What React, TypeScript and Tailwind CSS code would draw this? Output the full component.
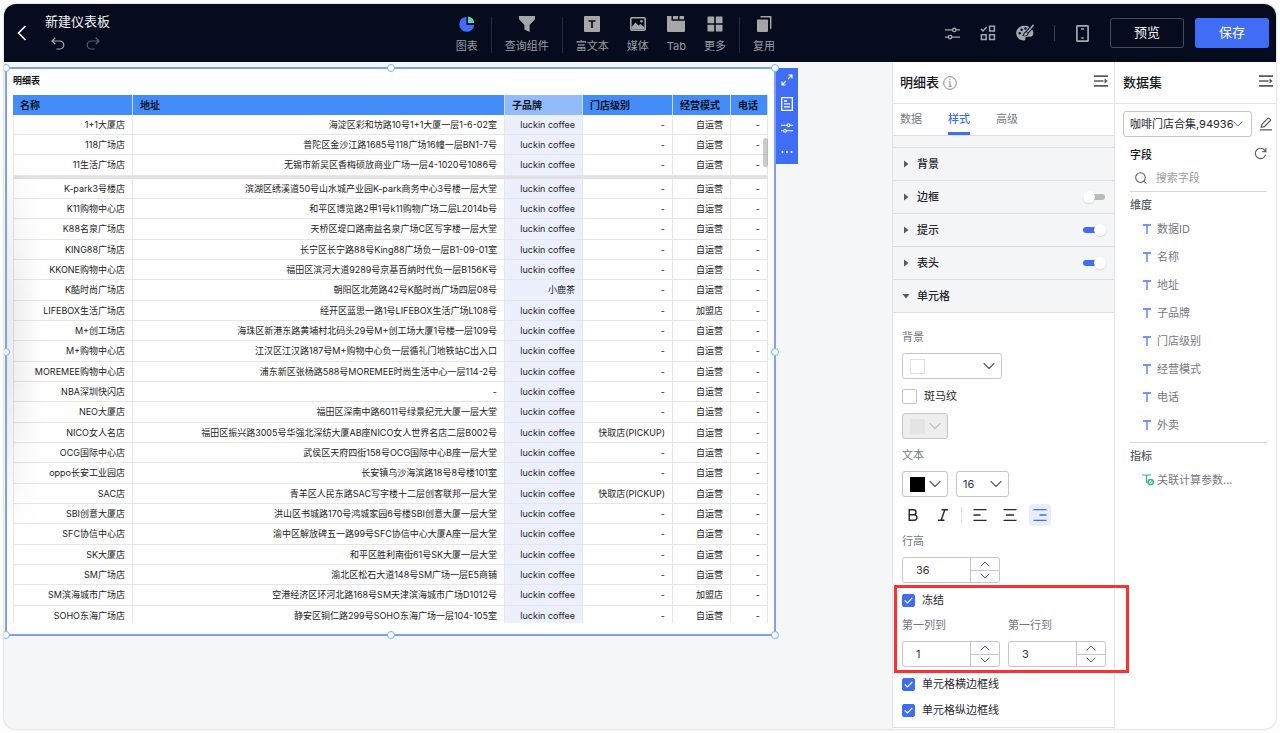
import React, { useState } from 'react';
import type { ReactNode } from 'react';
import { ChevronDown, ChevronUp } from 'lucide-react';

type Row = [string, string, string, string, string];

const LK = 'luckin coffee';
const ZY = '自运营';

const frozenRows: Row[] = [
  ['1+1大厦店', '海淀区彩和坊路10号1+1大厦一层1-6-02室', LK, '-', ZY],
  ['118广场店', '普陀区金沙江路1685号118广场16幢一层BN1-7号', LK, '-', ZY],
  ['11生活广场店', '无锡市新吴区香梅硕放商业广场一层4-1020号1086号', LK, '-', ZY],
];

const bodyRows: Row[] = [
  ['K-park3号楼店', '滨湖区绣溪道50号山水城产业园K-park商务中心3号楼一层大堂', LK, '-', ZY],
  ['K11购物中心店', '和平区博览路2甲1号k11购物广场二层L2014b号', LK, '-', ZY],
  ['K88名泉广场店', '天桥区堤口路南益名泉广场C区写字楼一层大堂', LK, '-', ZY],
  ['KING88广场店', '长宁区长宁路88号King88广场负一层B1-09-01室', LK, '-', ZY],
  ['KKONE购物中心店', '福田区滨河大道9289号京基百纳时代负一层B156K号', LK, '-', ZY],
  ['K酷时尚广场店', '朝阳区北苑路42号K酷时尚广场四层08号', '小鹿茶', '-', ZY],
  ['LIFEBOX生活广场店', '经开区蓝思一路1号LIFEBOX生活广场L108号', LK, '-', '加盟店'],
  ['M+创工场店', '海珠区新港东路黄埔村北码头29号M+创工场大厦1号楼一层109号', LK, '-', ZY],
  ['M+购物中心店', '江汉区江汉路187号M+购物中心负一层循礼门地铁站C出入口', LK, '-', ZY],
  ['MOREMEE购物中心店', '浦东新区张杨路588号MOREMEE时尚生活中心一层114-2号', LK, '-', ZY],
  ['NBA深圳快闪店', '-', LK, '-', ZY],
  ['NEO大厦店', '福田区深南中路6011号绿景纪元大厦一层大堂', LK, '-', ZY],
  ['NICO女人名店', '福田区振兴路3005号华强北深纺大厦AB座NICO女人世界名店二层B002号', LK, '快取店(PICKUP)', ZY],
  ['OCG国际中心店', '武侯区天府四街158号OCG国际中心B座一层大堂', LK, '-', ZY],
  ['oppo长安工业园店', '长安镇乌沙海滨路18号8号楼101室', LK, '-', ZY],
  ['SAC店', '青羊区人民东路SAC写字楼十二层创客联邦一层大堂', LK, '快取店(PICKUP)', ZY],
  ['SBI创意大厦店', '洪山区书城路170号鸿城家园6号楼SBI创意大厦一层大堂', LK, '-', ZY],
  ['SFC协信中心店', '渝中区解放碑五一路99号SFC协信中心大厦A座一层大堂', LK, '-', ZY],
  ['SK大厦店', '和平区胜利南街61号SK大厦一层大堂', LK, '-', ZY],
  ['SM广场店', '渝北区松石大道148号SM广场一层E5商铺', LK, '-', ZY],
  ['SM滨海城市广场店', '空港经济区环河北路168号SM天津滨海城市广场D1012号', LK, '-', '加盟店'],
  ['SOHO东海广场店', '静安区铜仁路299号SOHO东海广场一层104-105室', LK, '-', ZY],
];

const dimensions = ['数据ID', '名称', '地址', '子品牌', '门店级别', '经营模式', '电话', '外卖'];

/* ---------- icons ---------- */

const UndoIcon = () => (
  <svg viewBox="0 0 14 13" className="h-[13px] w-[14px]" fill="none" stroke="currentColor" strokeWidth="1.200" aria-hidden="true">
    <path d="M4.300.800 1 4l3.300 3.200M1 4h7.800a4 4 0 0 1 0 8H5.500" />
  </svg>
);
const RedoIcon = () => (
  <svg viewBox="0 0 14 13" className="h-[13px] w-[14px]" fill="none" stroke="currentColor" strokeWidth="1.200" aria-hidden="true">
    <path d="M9.700.800 13 4 9.700 7.200M13 4H5.200a4 4 0 0 0 0 8h3.300" />
  </svg>
);
const PieIcon = () => (
  <svg viewBox="0 0 16 16" className="h-4 w-4" aria-hidden="true">
    <path d="M7.4.8A7.5 7.5 0 1 0 15.2 9H7.4z" fill="#3f6df6" />
    <path d="M9 .6A7 7 0 0 1 15.2 7H9z" fill="#58d3ad" />
  </svg>
);
const FunnelIcon = () => (
  <svg viewBox="0 0 16 16" className="h-4 w-4" fill="#a6a6a6" aria-hidden="true">
    <path d="M0 0h16v3.2L10.6 9v7L5.4 13.4V9L0 3.2z" />
  </svg>
);
const RichTextIcon = () => (
  <svg viewBox="0 0 16 16" className="h-4 w-4" aria-hidden="true">
    <rect width="16" height="16" rx="1" fill="#a6a6a6" />
    <path d="M4.5 5h7M8 5v7" stroke="#060c1d" strokeWidth="1.7" fill="none" />
  </svg>
);
const MediaIcon = () => (
  <svg viewBox="0 0 16 16" className="h-4 w-4" aria-hidden="true">
    <rect x="0.8" y="1.8" width="14.4" height="12.4" rx="1" fill="none" stroke="#a6a6a6" strokeWidth="1.6" />
    <path d="M1.5 13.5V11L5.5 6.5l3 3L10.500 8l4 3.500v2z" fill="#a6a6a6" />
    <circle cx="11.500" cy="5.300" r="1.300" fill="#a6a6a6" />
  </svg>
);
const TabIcon = () => (
  <svg viewBox="0 0 18 16" className="h-4 w-[18px]" fill="#a6a6a6" aria-hidden="true">
    <path d="M0 0h4.500v4.800H18V15a1 1 0 0 1-1 1H1a1 1 0 0 1-1-1z" />
    <path d="M6 0h5v3.300H6zM12.500 0H17v3.300h-4.500z" />
  </svg>
);
const MoreIcon = () => (
  <svg viewBox="0 0 16 16" className="h-4 w-4" fill="#a6a6a6" aria-hidden="true">
    <rect x="0.500" y="0.500" width="6.700" height="6.700" rx="0.500" />
    <rect x="8.800" y="0.500" width="6.700" height="6.700" rx="0.500" />
    <rect x="0.500" y="8.800" width="6.700" height="6.700" rx="0.500" />
    <rect x="8.800" y="8.800" width="6.700" height="6.700" rx="0.500" />
  </svg>
);
const ReuseIcon = () => (
  <svg viewBox="0 0 16 16" className="h-4 w-4" aria-hidden="true">
    <rect x="1" y="3.500" width="11" height="12.500" rx="0.800" fill="#a6a6a6" />
    <path d="M4.500.8h10.200v12" fill="none" stroke="#a6a6a6" strokeWidth="1.500" />
  </svg>
);
const SlidersIcon = ({ className }: { className: string }) => (
  <svg viewBox="0 0 14 14" className={className} fill="none" stroke="currentColor" strokeWidth="1.200" aria-hidden="true">
    <path d="M0 3.700h7M10.400 3.700H14M0 10.300h3M6.400 10.300H14" />
    <circle cx="8.700" cy="3.700" r="1.600" />
    <circle cx="4.700" cy="10.300" r="1.600" />
  </svg>
);
const ChecklistIcon = () => (
  <svg viewBox="0 0 16 16" className="h-4 w-4" fill="none" stroke="#a4a7ae" strokeWidth="1.500" aria-hidden="true">
    <path d="M1 4l2 2 3.700-4" />
    <rect x="9.600" y="1.200" width="4.800" height="4.800" />
    <rect x="1.400" y="9.700" width="4.800" height="4.800" />
    <rect x="9.600" y="9.700" width="4.800" height="4.800" />
  </svg>
);
const PaletteIcon = () => (
  <svg viewBox="0 0 18 18" className="h-[18px] w-[18px]" aria-hidden="true">
    <path
      d="M8.700 1.800C3.900 1.800.2 5 .2 9c0 4 3.300 7.500 7.600 7.500 1.400 0 1.700-.8 1.600-1.700-.1-1.200.3-2 1.600-2h3.200c2 0 3.300-1.400 3.200-3.700-.2-4.200-4-7.300-8.700-7.300z"
      fill="#a4a7ae"
    />
    <g fill="#060c1d">
      <circle cx="3.800" cy="9.200" r="1.200" />
      <circle cx="5.600" cy="5.700" r="1.200" />
      <circle cx="9.500" cy="4.500" r="1.200" />
    </g>
    <path d="M17.600.8 11 8.600" stroke="#060c1d" strokeWidth="3.600" />
    <path d="M11.600 7.500c-2-.6-3.900.6-4.200 2.600-.1.900-.8 1.300-1.500 1.500 2.400 1.400 6.200.9 6.700-2.400z" fill="#060c1d" />
    <path d="M17.600.8 11.400 8.200" stroke="#a4a7ae" strokeWidth="1.500" />
    <path d="M11 8.400c-1.300-.4-2.500.5-2.700 1.800-.1.700-.5 1-1 1.200 1.500.6 3.900.2 4.300-1.800z" fill="#a4a7ae" />
  </svg>
);
const PhoneIcon = () => (
  <svg viewBox="0 0 13 17" className="h-[17px] w-[13px]" fill="none" stroke="#a4a7ae" strokeWidth="1.700" aria-hidden="true">
    <rect x="0.900" y="0.900" width="11.200" height="15.200" rx="0.500" />
    <path d="M5 4h3M5.300 13h2.400" />
  </svg>
);
const CollapseIcon = () => (
  <svg viewBox="0 0 14 12" className="h-3 w-[14px]" aria-hidden="true">
    <path d="M0 1.200h14M0 6h9.500M0 10.800h14" stroke="#565b66" strokeWidth="1.700" />
    <path d="M10.500 3.600v4.800L13.800 6z" fill="#565b66" />
  </svg>
);
const InfoIcon = () => (
  <svg viewBox="0 0 14 14" className="h-[14px] w-[14px]" fill="none" stroke="#83868f" aria-hidden="true">
    <circle cx="7" cy="7" r="6.300" />
    <path d="M5.800 5.700H7.100v4.600M5.500 10.300h3.200M6.300 3.600h1.200" />
  </svg>
);
const PencilIcon = () => (
  <svg viewBox="0 0 12 14" className="h-[14px] w-3" fill="none" stroke="#565b66" strokeWidth="1.200" aria-hidden="true">
    <path d="M1.300 10.300l.6-3L7.800 1.400a1 1 0 0 1 1.500 0l.9.9a1 1 0 0 1 0 1.500L4.300 9.700zM0 12.800h12" />
  </svg>
);
const RefreshIcon = () => (
  <svg viewBox="0 0 13 13" className="h-[13px] w-[13px]" fill="none" stroke="#565b66" strokeWidth="1.100" aria-hidden="true">
    <path d="M11.500 7.800A5.200 5.200 0 1 1 10.600 3.200L11.800 4.500M11.900 1v3.600H8.300" />
  </svg>
);
const SearchIcon = () => (
  <svg viewBox="0 0 14 14" className="h-[14px] w-[14px]" fill="none" stroke="#565b66" strokeWidth="1.200" aria-hidden="true">
    <circle cx="6.500" cy="6.500" r="5.700" />
    <path d="M10.600 10.700l2.900 2.900" />
  </svg>
);
const FieldIcon = () => (
  <svg viewBox="0 0 8 10" className="h-[10px] w-2" fill="none" stroke="#4a76f5" strokeWidth="1.300" aria-hidden="true">
    <path d="M0 1h8M4 1v9" />
  </svg>
);
const MetricIcon = () => (
  <svg viewBox="0 0 12 12" className="h-3 w-3" fill="none" stroke="#35b38c" aria-hidden="true">
    <path d="M0 1h9M4.500 1v8" strokeWidth="1.200" />
    <circle cx="8.700" cy="8" r="2.600" strokeWidth="1.500" />
    <path d="M7.600 9l2.200-2" />
  </svg>
);
const ExpandIcon = () => (
  <svg viewBox="0 0 12 12" className="h-3 w-3" fill="none" stroke="white" strokeWidth="1.100" aria-hidden="true">
    <path d="M7 5l4-4M7.500 1H11v3.500M5 7l-4 4M1 7.500V11h3.500" />
  </svg>
);
const SheetIcon = () => (
  <svg viewBox="0 0 12 14" className="h-[14px] w-3" fill="none" stroke="white" strokeWidth="1.300" aria-hidden="true">
    <path d="M.7.7h10.600v12.600H.7zM3 4h3M3 6.800h6M3 9.800h6" />
  </svg>
);
const DotsIcon = () => (
  <svg viewBox="0 0 12 4" className="h-1 w-3" fill="white" aria-hidden="true">
    <circle cx="1.500" cy="2" r="1" />
    <circle cx="6" cy="2" r="1" />
    <circle cx="10.500" cy="2" r="1" />
  </svg>
);

/* ---------- controls ---------- */

function ToolItem({ label, children }: { label: string; children: ReactNode }) {
  return (
    <button type="button" className="flex flex-col items-center gap-[6px] px-[9px] text-[11px] leading-4 text-[#9b9da3]">
      {children}
      <span>{label}</span>
    </button>
  );
}

const ToolDivider = () => <span className="mx-1 h-9 w-px bg-[#262b3a]" />;

function Toggle({ label, initial }: { label: string; initial: boolean }) {
  return (
    <input
      type="checkbox"
      role="switch"
      aria-label={label}
      defaultChecked={initial}
      className="relative h-[6px] w-[22px] appearance-none rounded-full bg-[#b9bbbf] before:absolute before:-top-[3px] before:left-0 before:h-3 before:w-3 before:rounded-full before:bg-white before:shadow-[0_1px_2px_rgba(0,0,0,0.12)] checked:bg-[#3f6df6] checked:before:left-[11px]"
    />
  );
}

function CheckRow({ label, initial }: { label: string; initial: boolean }) {
  const [on, setOn] = useState(initial);
  return (
    <label className="flex h-[18px] items-center gap-[7px] text-[11px] text-[#26282d]">
      <span className={on ? 'grid h-[13px] w-[13px] place-items-center' : 'grid h-[15px] w-[15px] place-items-center'}>
        <input
          type="checkbox"
          checked={on}
          onChange={(e) => setOn(e.target.checked)}
          className="col-start-1 row-start-1 h-[15px] w-[15px] appearance-none rounded-[2px] border border-[#c4c6cb] bg-white checked:h-[13px] checked:w-[13px] checked:border-[#3f6df6] checked:bg-[#3f6df6]"
        />
        {on && (
          <svg viewBox="0 0 9 7" className="pointer-events-none col-start-1 row-start-1 h-[7px] w-[9px]" fill="none" stroke="white" strokeWidth="1.200" aria-hidden="true">
            <path d="M.7 3.300 3.400 6 8.300.8" />
          </svg>
        )}
      </span>
      {label}
    </label>
  );
}

function Stepper({ id, value }: { id: string; value: number }) {
  const [n, setN] = useState(value);
  return (
    <div className="flex h-[26px] w-[98px] overflow-hidden rounded-[3px] border border-[#c4c6cb]">
      <input
        id={id}
        value={n}
        onChange={(e) => setN(Number(e.target.value) || 0)}
        className="w-[67px] pl-[13px] text-[11px] text-[#33363d] outline-none"
      />
      <div className="flex flex-1 flex-col divide-y divide-[#c4c6cb] border-l border-[#c4c6cb] text-[#565b66]">
        <button type="button" aria-label="增加" onClick={() => setN(n + 1)} className="flex flex-1 items-center justify-center overflow-hidden">
          <ChevronUp size={16} strokeWidth={1.500} className="shrink-0" />
        </button>
        <button type="button" aria-label="减少" onClick={() => setN(n - 1)} className="flex flex-1 items-center justify-center overflow-hidden">
          <ChevronDown size={16} strokeWidth={1.500} className="shrink-0" />
        </button>
      </div>
    </div>
  );
}

function Section({ title, open = false, toggle }: { title: string; open?: boolean; toggle?: boolean }) {
  return (
    <div className="flex h-[33px] items-center border-b border-[#dcdee2] bg-[#f4f5f7] pr-[9px] pl-[10px]">
      <button type="button" aria-expanded={open} className="flex flex-1 items-center gap-2 text-left text-[11px] font-medium text-[#26282d]">
        <svg viewBox="0 0 6 8" className={open ? 'h-2 w-[6px] rotate-90' : 'h-2 w-[6px]'} fill="#565b66" aria-hidden="true">
          <path d="M1 .5v7L5.500 4z" />
        </svg>
        {title}
      </button>
      {toggle !== undefined && <Toggle label={title} initial={toggle} />}
    </div>
  );
}

const labelStyle = 'block h-4 text-[11px] leading-4 text-[#747883]';

function AlignIcon({ mid }: { mid: string }) {
  return (
    <svg viewBox="0 0 14 12" className="h-3 w-[14px]" fill="none" stroke="currentColor" strokeWidth="1.300" aria-hidden="true">
      <path d={`M.5.700h13M${mid}M.5 11.300h13`} />
    </svg>
  );
}

/* ---------- detail table ---------- */

function DataRow({ row }: { row: Row }) {
  const cell = 'border-r border-b border-[#e6e6e6] pr-[7px] text-right whitespace-nowrap';
  return (
    <tr className="h-5 nth-[3n]:h-[21px]">
      <td className={`${cell} border-l`}>{row[0]}</td>
      <td className={cell}>{row[1]}</td>
      <td className={`${cell} bg-[#ecf0fd]`}>{row[2]}</td>
      <td className={cell}>{row[3]}</td>
      <td className={cell}>{row[4]}</td>
      <td className={cell}>-</td>
    </tr>
  );
}

function DetailTable() {
  const head = 'border-r border-[#c9dcfa] pl-[7px] text-left font-bold';
  return (
    <table className="w-full table-fixed border-separate border-spacing-0 text-[9px] leading-4 text-[#222]">
      <colgroup>
        <col className="w-[120px]" />
        <col />
        <col className="w-[78px]" />
        <col className="w-[90px]" />
        <col className="w-[58px]" />
        <col className="w-[37px]" />
      </colgroup>
      <thead>
        <tr className="h-5 bg-[#448cf8] text-[10px] text-[#0c1526]">
          <th className={head}>名称</th>
          <th className={head}>地址</th>
          <th className={`${head} bg-[#92bbfa]`}>子品牌</th>
          <th className={head}>门店级别</th>
          <th className={head}>经营模式</th>
          <th className={head}>电话</th>
        </tr>
      </thead>
      <tbody>
        {frozenRows.map((r) => (
          <DataRow key={r[0]} row={r} />
        ))}
      </tbody>
      <tbody aria-hidden="true">
        <tr className="h-[3px] leading-none">
          <td colSpan={6} className="bg-[#e2e2e2] p-0" />
        </tr>
      </tbody>
      <tbody>
        {bodyRows.map((r) => (
          <DataRow key={r[0]} row={r} />
        ))}
      </tbody>
    </table>
  );
}

const handles = [
  '-top-[5px] -left-[5px]',
  '-top-[5px] left-1/2 -ml-1',
  '-top-[5px] -right-[5px]',
  'top-1/2 -mt-1 -left-[5px]',
  'top-1/2 -mt-1 -right-[5px]',
  '-bottom-[5px] -left-[5px]',
  '-bottom-[5px] left-1/2 -ml-1',
  '-bottom-[5px] -right-[5px]',
];

function Header() {
  return (
    <header className="flex h-[58px] shrink-0 items-center bg-[#060c1d] pr-[7px]">
      <div className="flex w-[35%] items-center gap-[17px] pl-3">
        <button type="button" aria-label="返回">
          <svg viewBox="0 0 12 16" className="h-4 w-3" fill="none" stroke="white" strokeWidth="1.600" aria-hidden="true">
            <path d="M9.500 1 2.500 8l7 7" />
          </svg>
        </button>
        <div className="flex flex-col gap-2 pb-1">
          <h1 className="text-[13px] leading-4 text-[#f2f3f5]">新建仪表板</h1>
          <div className="flex gap-[21px] px-[6px]">
            <button type="button" aria-label="撤销" className="text-[#a4a7ae]">
              <UndoIcon />
            </button>
            <button type="button" aria-label="重做" className="text-[#565b66]">
              <RedoIcon />
            </button>
          </div>
        </div>
      </div>
      <nav className="flex items-center pt-[3px]">
        <ToolItem label="图表"><PieIcon /></ToolItem>
        <ToolDivider />
        <ToolItem label="查询组件"><FunnelIcon /></ToolItem>
        <ToolDivider />
        <ToolItem label="富文本"><RichTextIcon /></ToolItem>
        <ToolItem label="媒体"><MediaIcon /></ToolItem>
        <ToolItem label="Tab"><TabIcon /></ToolItem>
        <ToolItem label="更多"><MoreIcon /></ToolItem>
        <ToolDivider />
        <ToolItem label="复用"><ReuseIcon /></ToolItem>
      </nav>
      <div className="ml-auto flex items-center gap-[21px]">
        <div className="flex items-center gap-5">
          <button type="button" aria-label="筛选设置" className="text-[#a4a7ae]"><SlidersIcon className="h-[15px] w-[15px]" /></button>
          <button type="button" aria-label="组件管理"><ChecklistIcon /></button>
          <button type="button" aria-label="主题"><PaletteIcon /></button>
          <span className="h-4 w-px bg-[#3a3f4d]" />
        </div>
        <button type="button" aria-label="移动端"><PhoneIcon /></button>
        <div className="flex gap-[11px] text-[13px]">
          <button type="button" className="h-[30px] w-[74px] rounded-[3px] border border-[#464b59] text-[#f2f3f5]">预览</button>
          <button type="button" className="h-[30px] w-[74px] rounded-[3px] bg-[#3f6df6] text-white">保存</button>
        </div>
      </div>
    </header>
  );
}

function Canvas() {
  const action = 'flex h-6 w-full items-center justify-center text-white';
  return (
    <main className="flex min-w-0 flex-1 items-start bg-[#f5f6f8] pt-[5px] pl-px">
      <section className="relative flex h-[569px] w-[771px] shrink-0 flex-col border-2 border-[#7f9ff5] bg-white pt-1 pr-[6px] pb-[11px] pl-[6px]">
        <h2 className="mb-[6px] text-[9px] leading-4 font-bold text-[#111]">明细表</h2>
        <div className="relative min-h-0 flex-1 overflow-hidden">
          <DetailTable />
          <span className="absolute top-[43px] right-0 h-[29px] w-[5px] rounded-full bg-black/20" />
        </div>
        <span className="pointer-events-none absolute top-[72px] left-0 h-[400px] w-9 bg-linear-to-r from-black/8 to-transparent mask-y-from-60% mask-y-to-100%" />
        {handles.map((h) => (
          <span key={h} className={`absolute h-2 w-2 rounded-full border border-[#6cb6f5] bg-white ${h}`} />
        ))}
      </section>
      <div className="mt-px flex w-[22px] flex-col bg-[#3f6df6]">
        <button type="button" aria-label="全屏" className={action}><ExpandIcon /></button>
        <button type="button" aria-label="查看数据" className={action}><SheetIcon /></button>
        <button type="button" aria-label="设置" className={action}><SlidersIcon className="h-3 w-3" /></button>
        <button type="button" aria-label="更多操作" className={action}><DotsIcon /></button>
      </div>
    </main>
  );
}

function StylePanel() {
  const box = 'flex h-[26px] items-center rounded-[3px] border border-[#c4c6cb]';
  const tool = 'flex h-[22px] w-[22px] items-center justify-center';
  return (
    <aside className="flex w-[223px] shrink-0 flex-col border-x border-[#e1e3e6] bg-white">
      <div className="flex h-[42px] shrink-0 items-center gap-1 border-b border-[#e4e5e8] pr-[6px] pl-[7px]">
        <h2 className="text-[13px] font-medium text-[#16181d]">明细表</h2>
        <InfoIcon />
        <button type="button" aria-label="收起样式面板" className="mb-1 ml-auto"><CollapseIcon /></button>
      </div>
      <div role="tablist" className="flex h-8 shrink-0 gap-[26px] border-b border-[#dcdee2] pl-[7px] text-[11px] text-[#747883]">
        <button type="button" role="tab" aria-selected="false" className="border-y-3 border-transparent">数据</button>
        <button type="button" role="tab" aria-selected="true" className="border-y-3 border-t-transparent border-b-[#3f6df6] font-medium text-[#3f6df6]">样式</button>
        <button type="button" role="tab" aria-selected="false" className="border-y-3 border-transparent">高级</button>
      </div>
      <div className="h-3 shrink-0 border-b border-[#dcdee2] bg-[#f4f5f7]" />
      <Section title="背景" />
      <Section title="边框" toggle={false} />
      <Section title="提示" toggle={true} />
      <Section title="表头" toggle={true} />
      <Section title="单元格" open />
      <div className="flex flex-col gap-2 border-b border-[#dcdee2] px-[9px] pt-4 pb-2">
        <span className={labelStyle}>背景</span>
        <button type="button" aria-label="背景颜色" className={`${box} w-[100px] justify-between pr-[2px] pl-[7px] text-[#565b66]`}>
          <span className="h-[15px] w-[15px] border border-[#dcdee2] bg-white" />
          <ChevronDown size={20} strokeWidth={1.300} />
        </button>
        <CheckRow label="斑马纹" initial={false} />
        <button type="button" disabled aria-label="斑马纹颜色" className={`${box} w-[46px] justify-between bg-[#eeeeee] pr-[2px] pl-[7px] text-[#bfc1c5]`}>
          <span className="h-[15px] w-[15px] bg-[#e4e4e5]" />
          <ChevronDown size={20} strokeWidth={1.300} />
        </button>
        <span className={labelStyle}>文本</span>
        <div className="flex gap-2">
          <button type="button" aria-label="文本颜色" className={`${box} w-[46px] justify-between pr-[2px] pl-[7px] text-[#565b66]`}>
            <span className="h-[15px] w-[15px] bg-black" />
            <ChevronDown size={20} strokeWidth={1.300} />
          </button>
          <div className={`${box} relative w-[53px] text-[#565b66]`}>
            <select aria-label="字号" defaultValue="16" className="h-full w-full appearance-none bg-transparent pl-[6px] text-[11px] text-[#33363d] outline-none">
              <option>14</option>
              <option>16</option>
              <option>18</option>
            </select>
            <ChevronDown size={20} strokeWidth={1.300} className="pointer-events-none absolute right-[2px]" />
          </div>
        </div>
        <div className="flex h-5 items-center text-[#26282d]">
          <div className="flex gap-2">
            <button type="button" aria-label="加粗" className={tool}>
              <svg viewBox="0 0 10 12" className="h-3 w-[10px]" fill="none" stroke="currentColor" strokeWidth="1.400" aria-hidden="true">
                <path d="M1.200.800h4.300a2.500 2.500 0 0 1 0 5H1.200zM1.200 5.800h5a2.700 2.700 0 0 1 0 5.400h-5z" />
              </svg>
            </button>
            <button type="button" aria-label="斜体" className={tool}>
              <svg viewBox="0 0 10 12" className="h-3 w-[10px]" fill="none" stroke="currentColor" strokeWidth="1.400" aria-hidden="true">
                <path d="M3.500.800H10M0 11.200h6.500M6.800.800 3.200 11.200" />
              </svg>
            </button>
          </div>
          <span className="mx-[7px] h-4 w-px bg-[#dcdee2]" />
          <div className="flex gap-2">
            <button type="button" aria-label="左对齐" className={tool}><AlignIcon mid=".5 6h7" /></button>
            <button type="button" aria-label="居中对齐" className={tool}><AlignIcon mid="3 6h8" /></button>
            <button type="button" aria-label="右对齐" aria-pressed="true" className={`${tool} rounded-[3px] bg-[#e9eefe] text-[#3f6df6]`}><AlignIcon mid="6.500 6h7" /></button>
          </div>
        </div>
        <label htmlFor="row-height" className={labelStyle}>行高</label>
        <Stepper id="row-height" value={36} />
        <div className="relative flex flex-col gap-2">
          <CheckRow label="冻结" initial={true} />
          <div className="flex gap-2">
            <div className="flex flex-col gap-2">
              <label htmlFor="freeze-col" className={labelStyle}>第一列到</label>
              <Stepper id="freeze-col" value={1} />
            </div>
            <div className="flex flex-col gap-2">
              <label htmlFor="freeze-row" className={labelStyle}>第一行到</label>
              <Stepper id="freeze-row" value={3} />
            </div>
          </div>
          <span className="pointer-events-none absolute -top-[6px] -right-6 -bottom-[6px] -left-2 z-10 border-3 border-[#fb3030]" />
        </div>
        <CheckRow label="单元格横边框线" initial={true} />
        <CheckRow label="单元格纵边框线" initial={true} />
      </div>
    </aside>
  );
}

function DatasetPanel() {
  return (
    <aside className="flex w-[161px] shrink-0 flex-col bg-white">
      <div className="flex h-[42px] shrink-0 items-center border-b border-[#e4e5e8] pr-[3px] pl-2">
        <h2 className="text-[13px] font-medium text-[#16181d]">数据集</h2>
        <button type="button" aria-label="收起数据集面板" className="mb-1 ml-auto"><CollapseIcon /></button>
      </div>
      <div className="flex items-center gap-2 pt-[7px] pr-[4px] pl-2">
        <div className="relative flex h-[26px] min-w-0 flex-1 items-center rounded-[3px] border border-[#c4c6cb] text-[#565b66]">
          <select aria-label="数据集" className="h-full w-full appearance-none bg-transparent pl-[6px] text-[11px] text-[#26282d] outline-none">
            <option>咖啡门店合集,94936</option>
          </select>
          <ChevronDown size={16} strokeWidth={1.300} className="pointer-events-none absolute right-[5px]" />
        </div>
        <button type="button" aria-label="编辑数据集"><PencilIcon /></button>
      </div>
      <div className="flex flex-col pr-[9px] pl-[15px]">
        <div className="mt-2 flex h-5 items-center justify-between">
          <h3 className="text-[11px] font-medium text-[#16181d]">字段</h3>
          <button type="button" aria-label="刷新字段" className="pb-1"><RefreshIcon /></button>
        </div>
        <label className="flex h-[27px] items-center gap-[9px] border-b border-[#d5d7db] pl-[5px]">
          <SearchIcon />
          <input placeholder="搜索字段" aria-label="搜索字段" className="w-full min-w-0 text-[11px] outline-none placeholder:text-[#9a9da5]" />
        </label>
        <h3 className="mt-[5px] text-[11px] leading-4 font-medium text-[#565b66]">维度</h3>
        <ul className="mt-[2px] text-[11px] text-[#747883]">
          {dimensions.map((d) => (
            <li key={d} className="flex h-7 items-center gap-[6px] pl-[13px]">
              <FieldIcon />
              {d}
            </li>
          ))}
        </ul>
        <h3 className="mt-[3px] border-t border-[#d5d7db] pt-[5px] text-[11px] leading-4 font-medium text-[#565b66]">指标</h3>
        <ul className="mt-[2px] text-[11px] text-[#747883]">
          <li className="flex h-7 items-center gap-[3px] pl-3 whitespace-nowrap">
            <MetricIcon />
            关联计算参数...
          </li>
        </ul>
      </div>
    </aside>
  );
}

export default function App() {
  return (
    <div className="flex h-screen flex-col bg-[#fdfdfd] p-1 font-['Inter','Noto_Sans_CJK_SC',sans-serif]" lang="zh-CN">
      <div className="flex min-h-0 flex-1 flex-col overflow-hidden rounded-xl shadow-[0_0_2px_rgba(0,0,0,0.35)]">
        <Header />
        <div className="flex min-h-0 flex-1">
          <Canvas />
          <StylePanel />
          <DatasetPanel />
        </div>
      </div>
    </div>
  );
}
